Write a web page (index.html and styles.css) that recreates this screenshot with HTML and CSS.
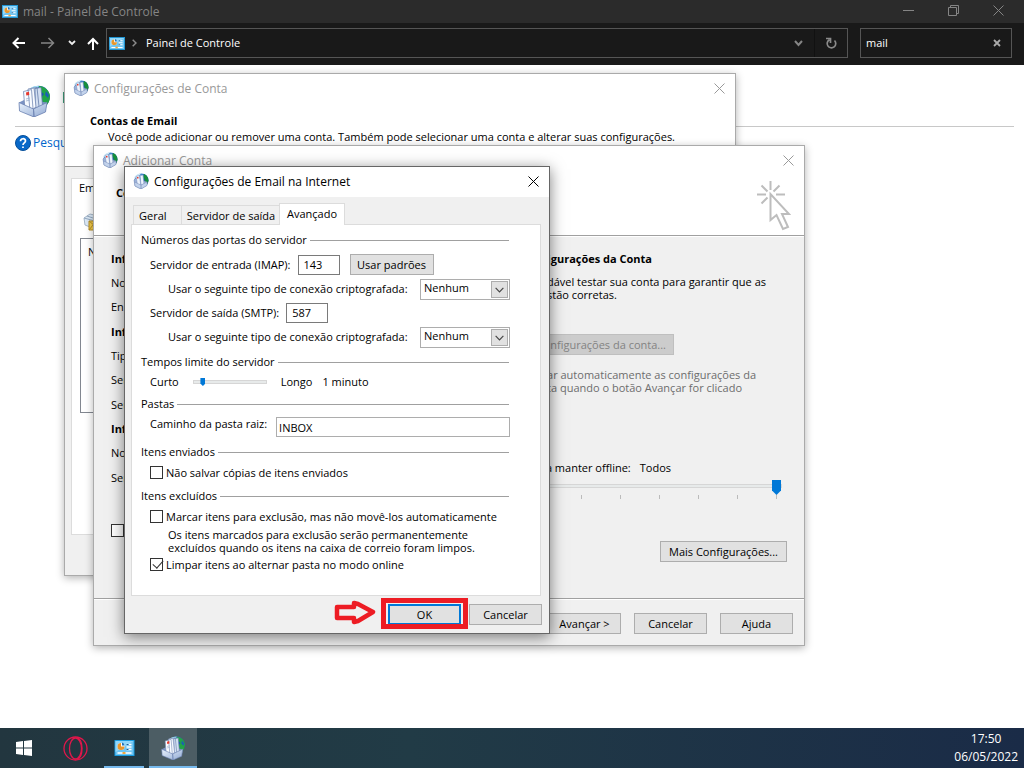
FILE: index.html
```html
<!DOCTYPE html>
<html lang="pt-BR">
<head>
<meta charset="utf-8">
<title>mail - Painel de Controle</title>
<link rel="stylesheet" href="styles.css">
</head>
<body>
<svg class="defs" aria-hidden="true">
  <linearGradient id="globe-fill" x1="0" y1="0" x2="1" y2="1"><stop offset="0" stop-color="#6fc0ee"/><stop offset=".45" stop-color="#1c5fb4"/><stop offset="1" stop-color="#123c86"/></linearGradient>
  <linearGradient id="tray-fill" x1="0" y1="0" x2="1" y2="1"><stop offset="0" stop-color="#e9f2fc"/><stop offset="1" stop-color="#91a9d3"/></linearGradient>
  <symbol id="mail" viewBox="0 0 32 32">
    <circle cx="20.500" cy="12" r="11.300" fill="url(#globe-fill)"/>
    <path d="M21 1c6 .3 10.500 4.800 11 10 0 5-2 8-5 11l-4-9 3-4-5-4z" fill="#22a447"/>
    <path d="M28 6l3 4-1 3-3-3z" fill="#1b60b4"/>
    <path d="M10 5c3-3.500 7-4.500 11-4l-3 3-5 2z" fill="#a9dff5"/>
    <path d="M1 17.500l6-3 22 3-1.500 9L16 32 1.500 25z" fill="#7b93c4"/>
    <path d="M17 3.500l6-1 1.500 18-7 4zM13 3.500l6-1 2 19-7 4z" fill="#d3dff1" stroke="#647eab" stroke-width=".8"/>
    <path d="M10 4l6-1 2 19-6 4zM5.500 6.500l8-2 1.500 19-8 1.500z" fill="#f8fbff" stroke="#7389b4" stroke-width=".8"/>
    <path d="M8 7.500l3-.8.300 3.300-3 .6z" fill="#e7392d"/>
    <path d="M8 14l4-1M8 16l4-1" stroke="#9cafce" stroke-width=".8"/>
    <path d="M1 17.500L15.500 24l.500 8L1.500 26zM15.500 24L29 17.500l-1.500 9.500L16 32z" fill="url(#tray-fill)" stroke="#6d83b2" stroke-width=".8"/>
  </symbol>
  <symbol id="mail-mini" viewBox="0 0 16 16">
    <circle cx="8.500" cy="7.500" r="7" fill="url(#globe-fill)"/>
    <path d="M11 1c3 1 4.500 4 4.500 7l-2 4-2.500-2 1-3-2-3z" fill="#168f3b"/>
    <path d="M1 5c1-3 4-4.500 7-4.500L5 4z" fill="#cfe8f6"/>
    <path d="M1 7l2-2 11 4v3l-6 4-6-3z" fill="#9db2d9" stroke="#6c82b1" stroke-width=".5"/>
    <path d="M7 2.500l3-.5 1 9-3 1zM3 3.500l3.500-1 1.200 9-3.200.5z" fill="#eef4fc" stroke="#8097c2" stroke-width=".6"/>
    <path d="M4 4h1.500v1.500H4z" fill="#e7392d"/>
    <path d="M1.500 9L8 12v4l-6-3zM8 12l6-3v3.500L8 16z" fill="#c3d3ec" stroke="#7c90bb" stroke-width=".5"/>
  </symbol>
  <symbol id="panel" viewBox="0 0 20 16">
    <rect x=".5" y=".5" width="19" height="15" fill="#70c5f2" stroke="#189ce1"/>
    <path d="M1 1h18L1 12z" fill="#91d7fa"/>
    <circle cx="6.500" cy="6.500" r="3.500" fill="#fff"/><path d="M6.500 6.500V3a3.500 3.500 0 1 0 3.500 3.500z" fill="#e8962c"/><path d="M7.500 2.500A3.500 3.500 0 0 1 10 5.500H7.500z" fill="#2072b8"/>
    <path d="M12 7h5M12 4.500h1m1 0h3M12 9.500h5M3 13h14" stroke="#fff" stroke-width="1.300"/><path d="M12 4.500h2M12 9.500h2" stroke="#195e9b"/><path d="M8 13h3" stroke="#f0a63d" stroke-width="2"/>
  </symbol>
  <symbol id="close" viewBox="0 0 11 11"><path d="M.5.500l10 10M10.500.500l-10 10" stroke="currentColor" fill="none"/></symbol>
  <symbol id="chevron" viewBox="0 0 10 6"><path d="M.7.700L5 5 9.300.700" stroke="currentColor" stroke-width="1.300" fill="none"/></symbol>
</svg>

<main class="explorer">
  <header class="explorer-title">
    <svg class="panel-icon"><use href="#panel"/></svg>
    <h1>mail - Painel de Controle</h1>
    <div class="window-controls">
      <button aria-label="Minimizar"><svg width="11" height="11"><path d="M0 5.500h11" stroke="currentColor"/></svg></button>
      <button aria-label="Restaurar"><svg width="11" height="11" fill="none" stroke="currentColor"><path d="M.5 2.500h8v8h-8zM2.500 2.500v-2h8v8h-2"/></svg></button>
      <button aria-label="Fechar"><svg width="11" height="11"><use href="#close"/></svg></button>
    </div>
  </header>
  <nav class="explorer-nav">
    <div class="arrows">
      <button aria-label="Voltar"><svg width="14" height="12" fill="none" stroke="#fff" stroke-width="2"><path d="M13 6H2M6.500 1L1.500 6l5 5"/></svg></button>
      <button aria-label="Avançar"><svg width="14" height="12" fill="none" stroke="#858585" stroke-width="1.500"><path d="M0 6h12M7.500 1l5 5-5 5"/></svg></button>
      <button aria-label="Locais recentes"><svg width="8" height="6" fill="none" stroke="#eee" stroke-width="1.800"><path d="M1 1l3 3 3-3"/></svg></button>
      <button aria-label="Acima"><svg width="12" height="13" fill="none" stroke="#fff" stroke-width="2"><path d="M6 13V2M1 7l5-5 5 5"/></svg></button>
    </div>
    <div class="address">
      <svg class="panel-icon"><use href="#panel"/></svg>
      <svg class="crumb" viewBox="0 0 5 8"><path d="M.7.700L4 4 .7 7.300" stroke="#8b8b8b" stroke-width="1.500" fill="none"/></svg>
      <span>Painel de Controle</span>
      <button class="address-drop" aria-label="Histórico"><svg width="9" height="7" fill="none" stroke="#858585" stroke-width="2"><path d="M1 1l3.500 4L8 1"/></svg></button>
      <button class="reload" aria-label="Atualizar"><svg width="12" height="12" fill="none" stroke="#8a8a8a" stroke-width="1.700"><path d="M9.500 3.500a4.300 4.300 0 1 1-5-.8M1 1.500h4.500V6"/></svg></button>
    </div>
    <div class="search">
      <input type="text" value="mail" aria-label="Pesquisar">
      <button aria-label="Limpar"><svg width="8" height="8" stroke="#aaa" stroke-width="1.800"><path d="M1 1l6 6M7 1L1 7"/></svg></button>
    </div>
  </nav>
  <section class="results">
    <div class="result"><svg class="mail-large"><use href="#mail"/></svg><i class="result-edge"></i></div>
    <div class="help"><svg width="16" height="16" viewBox="0 0 16 16"><circle cx="8" cy="8" r="7.500" fill="#0868c8" stroke="#064f9a"/><path d="M5.500 6.200c0-3.200 5-3.300 5-.3 0 2-2.500 1.900-2.500 4M8 11.500v1.500" fill="none" stroke="#fff" stroke-width="1.700"/></svg><a href="#">Pesqu</a></div>
  </section>
</main>

<section class="window accounts">
  <header class="titlebar"><svg class="mail-small"><use href="#mail-mini"/></svg><h2>Configurações de Conta</h2><button class="close" aria-label="Fechar"><svg width="11" height="11"><use href="#close"/></svg></button></header>
  <div class="accounts-heading">
    <h3>Contas de Email</h3>
    <p>Você pode adicionar ou remover uma conta. Também pode selecionar uma conta e alterar suas configurações.</p>
  </div>
  <div class="accounts-body">
    <div class="accounts-panel">
      <span>Em</span>
      <svg class="new-mail" width="20" height="18" viewBox="0 0 20 18"><path d="M1 5l6-4 12 3v8l-7 4-10-4z" fill="#dce9f6" stroke="#a4b6c9"/><path d="M1 5l11 3 7-4M4 3l9 3" fill="none" stroke="#94aac1"/><path d="M6 8h12v9H6z" fill="#f2ca48" stroke="#b38d28"/><path d="M6 8l6 5 6-5M6 17l4-5m8 5l-4-5" fill="none" stroke="#b38d28"/></svg>
      <div class="accounts-list">N</div>
    </div>
  </div>
</section>

<section class="window add-account">
  <header class="titlebar"><svg class="mail-small"><use href="#mail-mini"/></svg><h2>Adicionar Conta</h2><button class="close" aria-label="Fechar"><svg width="11" height="11"><use href="#close"/></svg></button></header>
  <div class="add-heading">
    <h3>Co</h3>
    <svg class="pointer" width="34" height="50" fill="none" stroke="#bdbdbd" stroke-width="2"><path d="M13.500 0v9M0 13.500h9M19 13.500h9M4.500 4.500l6 6M22.500 4.500l-6 6M4.500 22.500l6-6M13.500 13v26l6-5L26 48l5-2-6-13h7z"/></svg>
  </div>
  <div class="add-body">
    <div class="left-fields">
      <h4>Inf</h4><span>No</span><span>En</span>
      <h4>Inf</h4><span>Tip</span><span>Ser</span><span>Ser</span>
      <h4>Inf</h4><span>No</span><span>Ser</span>
      <input type="checkbox" aria-label="SPA">
    </div>
    <div class="test-settings">
      <h4>figurações da Conta</h4>
      <p class="advice">dável testar sua conta para garantir que as<br>stão corretas.</p>
      <button class="button test" disabled>nfigurações da conta...</button>
      <p class="auto">ar automaticamente as configurações da<br>ta quando o botão Avançar for clicado</p>
      <label class="offline" for="offline"><span>a manter offline:</span><span>Todos</span></label>
      <input id="offline" class="slider offline-slider" type="range" min="0" max="6" value="6">
      <div class="ticks"><i></i><i></i><i></i><i></i><i></i><i></i><i></i></div>
      <button class="button more">Mais Configurações...</button>
    </div>
  </div>
  <footer class="add-footer"><button class="button">Avançar &gt;</button><button class="button">Cancelar</button><button class="button">Ajuda</button></footer>
</section>

<section class="window internet" role="dialog" aria-labelledby="dialog-title">
  <header class="titlebar"><svg class="mail-small"><use href="#mail-mini"/></svg><h2 id="dialog-title">Configurações de Email na Internet</h2><button class="close" aria-label="Fechar"><svg width="11" height="11"><use href="#close"/></svg></button></header>
  <div class="tabs" role="tablist"><button role="tab">Geral</button><button role="tab">Servidor de saída</button><button role="tab" class="active" aria-selected="true">Avançado</button></div>
  <form class="settings">
    <h3 class="group">Números das portas do servidor</h3>
    <div class="row port"><label for="imap">Servidor de entrada (IMAP):</label><input id="imap" class="number" type="text" value="143"><button type="button" class="button defaults">Usar padrões</button></div>
    <div class="row encryption"><label for="enc-in">Usar o seguinte tipo de conexão criptografada:</label><span class="select"><select id="enc-in"><option>Nenhum</option></select><svg><use href="#chevron"/></svg></span></div>
    <div class="row port"><label for="smtp">Servidor de saída (SMTP):</label><input id="smtp" class="number" type="text" value="587"></div>
    <div class="row encryption"><label for="enc-out">Usar o seguinte tipo de conexão criptografada:</label><span class="select"><select id="enc-out"><option>Nenhum</option></select><svg><use href="#chevron"/></svg></span></div>
    <h3 class="group">Tempos limite do servidor</h3>
    <div class="row timeout"><label for="timeout">Curto</label><input id="timeout" class="slider" type="range" min="0" max="20" value="2"><span>Longo</span><output for="timeout">1 minuto</output></div>
    <h3 class="group">Pastas</h3>
    <div class="row folder"><label for="root">Caminho da pasta raiz:</label><input id="root" type="text" value="INBOX"></div>
    <h3 class="group">Itens enviados</h3>
    <label class="row check"><input type="checkbox">Não salvar cópias de itens enviados</label>
    <h3 class="group">Itens excluídos</h3>
    <label class="row check"><input type="checkbox">Marcar itens para exclusão, mas não movê-los automaticamente</label>
    <p class="note">Os itens marcados para exclusão serão permanentemente<br>excluídos quando os itens na caixa de correio foram limpos.</p>
    <label class="row check"><input type="checkbox" checked>Limpar itens ao alternar pasta no modo online</label>
  </form>
  <footer class="dialog-footer">
    <svg class="arrow" width="42" height="26" fill="none" stroke="#ed1c24" stroke-width="4.500" stroke-linejoin="round"><path d="M3 7h17V3l4 1 15 8-15 9-4 1v-4H3z"/></svg>
    <span class="marked"><button class="button ok">OK</button></span><button class="button">Cancelar</button>
  </footer>
</section>

<footer class="taskbar">
  <button aria-label="Iniciar"><svg width="16" height="16" fill="#fff"><path d="M0 2l7-1v6.500H0zM8 1l8-1v7.500H8zM0 8.500h7V15l-7-1zM8 8.500h8V16l-8-1z"/></svg></button>
  <button aria-label="Opera"><svg width="25" height="25" fill="none" stroke="#e1174b" stroke-width="1.300"><circle cx="12.500" cy="12.500" r="11.500"/><ellipse cx="12.500" cy="12.500" rx="6" ry="10.500"/><path d="M14 1.500q5 2 5 11t-5 11"/></svg></button>
  <button class="open" aria-label="Painel de Controle"><svg width="21" height="16"><use href="#panel"/></svg></button>
  <button class="open current" aria-label="Email"><svg width="24" height="24"><use href="#mail"/></svg></button>
  <time datetime="2022-05-06T17:50"><span>17:50</span><span>06/05/2022</span></time>
</footer>
</body>
</html>
```
FILE: styles.css
```css
* { box-sizing: border-box; }
body {
  margin: 0;
  height: 100vh;
  display: flex;
  flex-direction: column;
  overflow: hidden;
  background: #fff;
  color: #000;
  font: 11px/14px "Open Sans", "Noto Sans", sans-serif;
}
button, input, select { font: inherit; color: inherit; margin: 0; }
button { background: none; border: 0; padding: 0; }
h1, h2, h3, h4, p { margin: 0; font: inherit; }
svg { display: block; flex: none; }
a { color: #0066cc; text-decoration: none; }
.defs { position: absolute; width: 0; height: 0; }
.panel-icon { width: 16px; height: 13px; }
.mail-small { width: 16px; height: 16px; }
.mail-large { width: 32px; height: 32px; }

.explorer { flex: 1; display: flex; flex-direction: column; }
.explorer-title { height: 23px; display: flex; align-items: center; background: #2b2b2b; color: #858585; padding-left: 2px; gap: 5px; }
.explorer-title h1 { font-size: 12px; }
.window-controls { margin-left: auto; display: flex; padding: 0 3px 3px 0; }
.window-controls button { width: 45px; display: flex; justify-content: center; }
.explorer-nav { height: 42px; display: flex; align-items: flex-start; background: #191919; color: #fff; padding: 5px 12px 0 12px; gap: 12px; }
.arrows { display: flex; align-items: center; justify-content: space-between; height: 30px; width: 87px; }
.arrows button:nth-child(3) { margin: 0 -4px 0 -3px; }
.address { flex: 1; height: 30px; display: flex; align-items: center; border: 1px solid #555; padding-left: 2px; margin-left: -5px; }
.crumb { width: 5px; height: 8px; margin: 0 9px 0 7px; }
.address-drop { margin-left: auto; padding: 0 11px; }
.reload { border-left: 1px solid #111; height: 28px; width: 33px; display: flex; align-items: center; justify-content: center; }
.search { width: 152px; height: 30px; border: 1px solid #555; display: flex; align-items: center; padding: 0 10px 0 5px; }
.search input { flex: 1; min-width: 0; background: none; border: 0; outline: 0; padding: 0; }
.results { padding: 20px 10px 0 15px; }
.result { height: 42px; display: flex; gap: 13px; padding-left: 3px; border-bottom: 1px solid #c8c8c8; }
.result-edge { width: 2px; height: 11px; margin-top: 7px; background: #3d9a78; }
.help { display: flex; align-items: center; gap: 2px; padding-top: 8px; font-size: 12px; }

.window { position: absolute; display: flex; flex-direction: column; border: 1px solid #aaa; background: #f0f0f0; box-shadow: 0 2px 8px rgba(0,0,0,.3); }
.titlebar { height: 30px; flex: none; display: flex; align-items: center; gap: 5px; padding: 0 10px 0 8px; background: #fff; color: #999; }
.titlebar h2 { font-size: 12px; }
.titlebar .mail-small { margin-bottom: 2px; }
.close { margin-left: auto; padding-bottom: 2px; }
.button { background: #e1e1e1; border: 1px solid #adadad; height: 21px; min-width: 73px; }
.button:disabled { background: #ccc; border-color: #bfbfbf; color: #838383; }

.accounts { left: 64px; top: 73px; width: 672px; height: 503px; }
.accounts-heading { height: 63px; background: #fff; padding: 10px 25px 0; border-bottom: 1px solid #a0a0a0; }
.accounts-heading h3 { font-weight: 700; }
.accounts-heading p { padding: 2px 0 0 18px; white-space: nowrap; }
.accounts-body { flex: 1; padding: 11px 6px 40px; display: flex; }
.accounts-panel { flex: 1; background: #fff; border: 1px solid #dcdcdc; padding: 2px 8px 3px 7px; display: flex; flex-direction: column; }
.new-mail { margin: 18px 0 7px 4px; }
.accounts-list { height: 175px; margin-left: 1px; border: 1px solid #828790; padding: 6px 7px; }

.add-account { left: 93px; top: 145px; width: 712px; height: 501px; }
.add-heading { height: 60px; flex: none; display: flex; justify-content: space-between; background: #fff; padding: 5px 13px 0 22px; border-bottom: 1px solid #a0a0a0; box-shadow: 0 1px #fff; }
.add-heading h3 { font-weight: 700; padding-top: 5px; }
.add-body { flex: 1; display: flex; justify-content: space-between; padding: 16px 17px 0 17px; border-bottom: 1px solid #a0a0a0; box-shadow: 0 1px #fff; }
.add-body h4 { font-weight: 700; }
.left-fields { display: grid; grid-template-rows: repeat(4, 24px 24px 25px); align-content: start; }
.left-fields input { margin-top: 29px; }
.test-settings { width: 300px; display: flex; flex-direction: column; align-items: flex-end; white-space: nowrap; line-height: 13px; }
.test-settings h4 { margin-right: 135px; }
.advice { margin: 10px 21px 0 0; }
.test { margin: 33px 113px 0 0; padding: 0 7px; }
.auto { margin: 13px 31px 0 0; color: #6d6d6d; }
.offline { display: flex; gap: 9px; margin: 67px 116px 0 0; }
.ticks { width: 235px; display: flex; justify-content: space-between; margin-right: 10px; }
.ticks i { width: 1px; height: 4px; background: #bbb; }
.more { width: 127px; margin-top: 42px; }
.add-footer { height: 46px; flex: none; display: flex; justify-content: flex-end; align-items: center; gap: 13px; padding: 3px 11px 0; }

.slider { appearance: none; background: none; padding: 0; height: 15px; }
.slider::-webkit-slider-runnable-track { height: 4px; background: #e7eaea; border: 1px solid #d6d6d6; }
.slider::-webkit-slider-thumb { appearance: none; width: 5px; height: 8px; margin-top: -3px; background: #0078d7; clip-path: polygon(0 0, 100% 0, 100% 70%, 50% 100%, 0 70%); }
.offline-slider { width: 300px; margin: 3px 5px 0 0; height: 18px; }
.offline-slider::-webkit-slider-thumb { width: 9px; height: 15px; margin-top: -5px; }

.internet { left: 124px; top: 166px; width: 426px; height: 468px; border-color: #666; box-shadow: 0 3px 14px rgba(0,0,0,.5); }
.internet .titlebar { color: #000; }
.tabs { display: flex; align-items: flex-end; height: 27px; flex: none; padding: 0 8px; }
.tabs button { height: 19px; border: 1px solid #dcdcdc; border-bottom: 0; padding: 1px 5px 0; }
.tabs button:first-child { width: 48px; border-right: 0; text-align: left; }
.tabs button:nth-child(2) { width: 100px; padding: 1px 0 0; }
.tabs .active { width: 66px; height: 22px; background: #fff; margin: 0 0 -1px -2px; z-index: 1; padding: 0 0 2px; }
.settings { margin: 0 8px 0 6px; border: 1px solid #dcdcdc; background: #fff; height: 372px; padding: 2px 31px 0 9px; }
.group { display: flex; align-items: center; gap: 3px; height: 26px; }
.group::after { content: ""; flex: 1; height: 1px; background: #a0a0a0; }
.row { display: flex; align-items: center; padding-left: 9px; height: 24px; white-space: nowrap; }
.number { width: 42px; height: 20px; border: 1px solid #7a7a7a; padding: 0 5px 1px; margin: 0 0 1px 7px; }
.defaults { width: 84px; margin: 0 0 1px 10px; }
.encryption { padding-left: 27px; justify-content: space-between; margin-right: -1px; }
.select { position: relative; width: 90px; height: 21px; }
.select select { appearance: none; width: 100%; height: 100%; background: #fff; border: 1px solid #adadad; border-radius: 0; padding: 0 3px 2px; display: block; }
.select svg { position: absolute; right: 2px; top: 2px; width: 17px; height: 17px; padding: 4px 3px 3px; border: 1px solid #adadad; background: #e1e1e1; color: #444; pointer-events: none; }
.timeout { height: 16px; padding-bottom: 2px; }
.timeout .slider { width: 74px; margin: 0 14px; }
.timeout output { margin-left: 10px; }
.folder { height: 22px; gap: 9px; margin-right: -1px; align-items: flex-start; }
.folder input { flex: 1; min-width: 0; height: 20px; border: 1px solid #adadad; padding: 0 2px; }
.check { height: 18px; gap: 3px; padding-bottom: 3px; }
input[type="checkbox"] { appearance: none; width: 13px; height: 13px; border: 1px solid #333; background: #fff; flex: none; }
input[type="checkbox"]:checked::after { content: ""; display: block; width: 5px; height: 9px; margin: -1px 0 0 4px; border: solid #333; border-width: 0 1px 1px 0; transform: rotate(42deg); }
.note { padding: 1px 0 3px 27px; line-height: 13px; white-space: nowrap; }
.dialog-footer { flex: 1; display: flex; align-items: flex-start; justify-content: flex-end; gap: 8px; padding: 8px 7px 0; }
.arrow { margin: -4px 4px 0 0; }
.marked { position: relative; }
.marked::after { content: ""; position: absolute; inset: -6px -7px -4px; border: 5px solid #ed1c24; pointer-events: none; }
.ok { border: 2px solid #0078d7; display: block; }

.taskbar { height: 40px; display: flex; flex: none; background: linear-gradient(90deg, #22363f, #213b46 40%, #1a2b47); color: #fff; }
.taskbar button { width: 48px; display: flex; align-items: center; justify-content: center; }
.taskbar button:nth-child(2) { width: 54px; }
.taskbar .open { width: 40px; margin-left: 2px; border-bottom: 2px solid #76b9ed; padding-top: 2px; }
.taskbar .current { width: 48px; margin-left: 5px; background: #4c5d64; }
.taskbar time { margin-left: auto; display: flex; flex-direction: column; align-items: center; font-size: 12px; line-height: 18px; padding: 2px 6px; }
```
